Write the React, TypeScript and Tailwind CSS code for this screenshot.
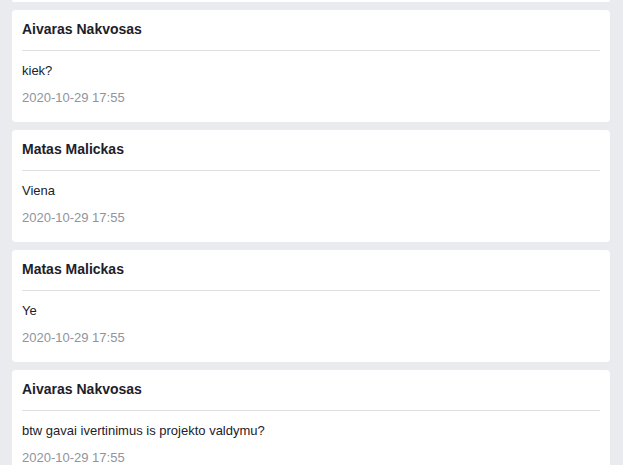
export default function App() {
  const msgs = [
    { name: "Aivaras Nakvosas", text: "kiek?", time: "2020-10-29 17:55" },
    { name: "Matas Malickas", text: "Viena", time: "2020-10-29 17:55" },
    { name: "Matas Malickas", text: "Ye", time: "2020-10-29 17:55" },
    { name: "Aivaras Nakvosas", text: "btw gavai ivertinimus is projekto valdymu?", time: "2020-10-29 17:55" },
  ];
  return (
    <div className="h-[465px] overflow-hidden bg-[#e9ebee] pl-[12px] pr-[13px]" style={{ fontFamily: '"Liberation Sans", Arial, sans-serif' }}>
      <div className="h-[2px] rounded-b-[4px] bg-white" />
      <div className="mt-[8px] flex flex-col gap-[8px]">
        {msgs.map((m, i) => (
          <div key={i} className="rounded-[4px] bg-white px-[10px] pt-[10px] pb-[15px]">
            <div className="text-[14px] font-bold leading-[18px] text-[#1d2129]">{m.name}</div>
            <div className="mt-[12px] border-t border-[#dddfe2]" />
            <div className="mt-[11px] text-[13px] leading-[18px] text-[#1d2129]">{m.text}</div>
            <div className="mt-[9px] text-[13px] leading-[18px] text-[#90949c]">{m.time}</div>
          </div>
        ))}
      </div>
    </div>
  );
}
